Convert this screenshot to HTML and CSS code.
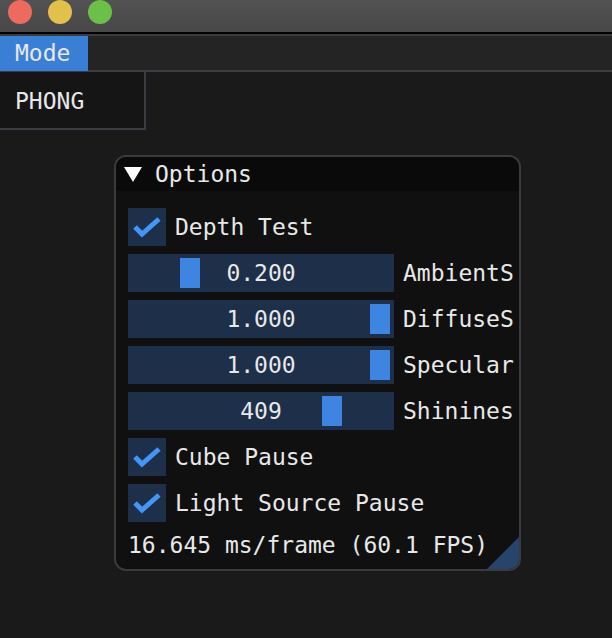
FILE: index.html
```html
<!DOCTYPE html>
<html>
<head>
<meta charset="utf-8">
<link rel="stylesheet" href="styles.css">
</head>
<body>
<div class="titlebar">
  <span class="dot red"></span>
  <span class="dot yellow"></span>
  <span class="dot green"></span>
</div>
<div class="menubar">
  <div class="menu-item active">Mode</div>
</div>
<div class="canvas">
  <div class="popup">PHONG</div>
  <div class="window">
    <div class="win-title">
      <svg class="tri" width="18" height="15" viewBox="0 0 18 15"><polygon points="0,0 18,0 9,15" fill="#ffffff"/></svg>
      <span>Options</span>
    </div>
    <div class="win-body">
      <div class="clip">
        <div class="row">
          <div class="check"><svg width="38" height="38" viewBox="0 0 38 38"><polyline points="7,19 14,26 31,11" fill="none" stroke="#4296fa" stroke-width="5"/></svg></div>
          <span class="label">Depth Test</span>
        </div>
        <div class="row">
          <div class="slider"><span class="grab" style="left:52px"></span><span class="val">0.200</span></div>
          <span class="label">AmbientS</span>
        </div>
        <div class="row">
          <div class="slider"><span class="grab" style="left:242px"></span><span class="val">1.000</span></div>
          <span class="label">DiffuseS</span>
        </div>
        <div class="row">
          <div class="slider"><span class="grab" style="left:242px"></span><span class="val">1.000</span></div>
          <span class="label">Specular</span>
        </div>
        <div class="row">
          <div class="slider"><span class="grab" style="left:194px"></span><span class="val">409</span></div>
          <span class="label">Shinines</span>
        </div>
        <div class="row">
          <div class="check"><svg width="38" height="38" viewBox="0 0 38 38"><polyline points="7,19 14,26 31,11" fill="none" stroke="#4296fa" stroke-width="5"/></svg></div>
          <span class="label">Cube Pause</span>
        </div>
        <div class="row">
          <div class="check"><svg width="38" height="38" viewBox="0 0 38 38"><polyline points="7,19 14,26 31,11" fill="none" stroke="#4296fa" stroke-width="5"/></svg></div>
          <span class="label">Light Source Pause</span>
        </div>
        <div class="row text-row">
          <span class="label">16.645 ms/frame (60.1 FPS)</span>
        </div>
      </div>
    </div>
    <div class="grip"></div>
  </div>
</div>
</body>
</html>
```
FILE: styles.css
```css
* { box-sizing: border-box; }
html, body {
  margin: 0;
  padding: 0;
  width: 612px;
  height: 638px;
  overflow: hidden;
  background: #1a1a1a;
  font-family: "DejaVu Sans Mono", "Liberation Mono", monospace;
  font-size: 23px;
  color: #e8e8e8;
}
.titlebar {
  height: 36px;
  background: linear-gradient(#525252, #474747);
  border-bottom: 2px solid #3a3a3a;
  box-shadow: inset 0 -2px 0 #000;
  display: flex;
  align-items: flex-start;
  gap: 16px;
  padding-left: 8px;
}
.dot {
  width: 24px;
  height: 24px;
  border-radius: 50%;
  display: block;
}
.red { background: #ed6a5e; }
.yellow { background: #e1c04c; }
.green { background: #6bc048; }
.menubar {
  height: 36px;
  background: #242424;
  border-bottom: 2px solid #3c3c42;
  display: flex;
}
.menu-item {
  height: 35px;
  padding: 0 15px;
  line-height: 35px;
  width: 88px;
}
.menu-item.active { background: #3a7fd6; }
.canvas {
  position: relative;
  height: 566px;
}
.popup {
  position: absolute;
  left: 0;
  top: 0;
  width: 146px;
  height: 58px;
  background: #151515;
  border-right: 2px solid #3c3c42;
  border-bottom: 2px solid #3c3c42;
  padding-left: 15px;
  line-height: 58px;
}
.window {
  position: absolute;
  left: 114px;
  top: 83px;
  width: 407px;
  height: 416px;
  border: 2px solid #3a3a40;
  border-radius: 12px;
  background: #101010;
  overflow: hidden;
}
.win-title {
  height: 34px;
  background: #0a0a0a;
  display: flex;
  align-items: center;
  padding-left: 8px;
  gap: 13px;
}
.tri { display: block; flex-shrink: 0; }
.win-body {
  padding: 17px 5px 0 12px;
}
.clip {
  display: flex;
  flex-direction: column;
  gap: 8px;
}
.row {
  display: flex;
  align-items: center;
  gap: 9px;
  height: 38px;
  white-space: nowrap;
}
.text-row { height: 30px; }
.check {
  width: 38px;
  height: 38px;
  flex-shrink: 0;
  background: #1d2f49;
}
.check svg { display: block; }
.slider {
  position: relative;
  width: 266px;
  height: 38px;
  flex-shrink: 0;
  background: #1d2f49;
  display: flex;
  align-items: center;
  justify-content: center;
}
.grab {
  position: absolute;
  top: 4px;
  width: 20px;
  height: 30px;
  background: #3d85e0;
}
.val { position: relative; }
.label { flex-shrink: 0; }
.grip {
  position: absolute;
  right: 0;
  bottom: 0;
  width: 32px;
  height: 32px;
  background: #27446b;
  clip-path: polygon(100% 0, 100% 100%, 0 100%);
}
```
